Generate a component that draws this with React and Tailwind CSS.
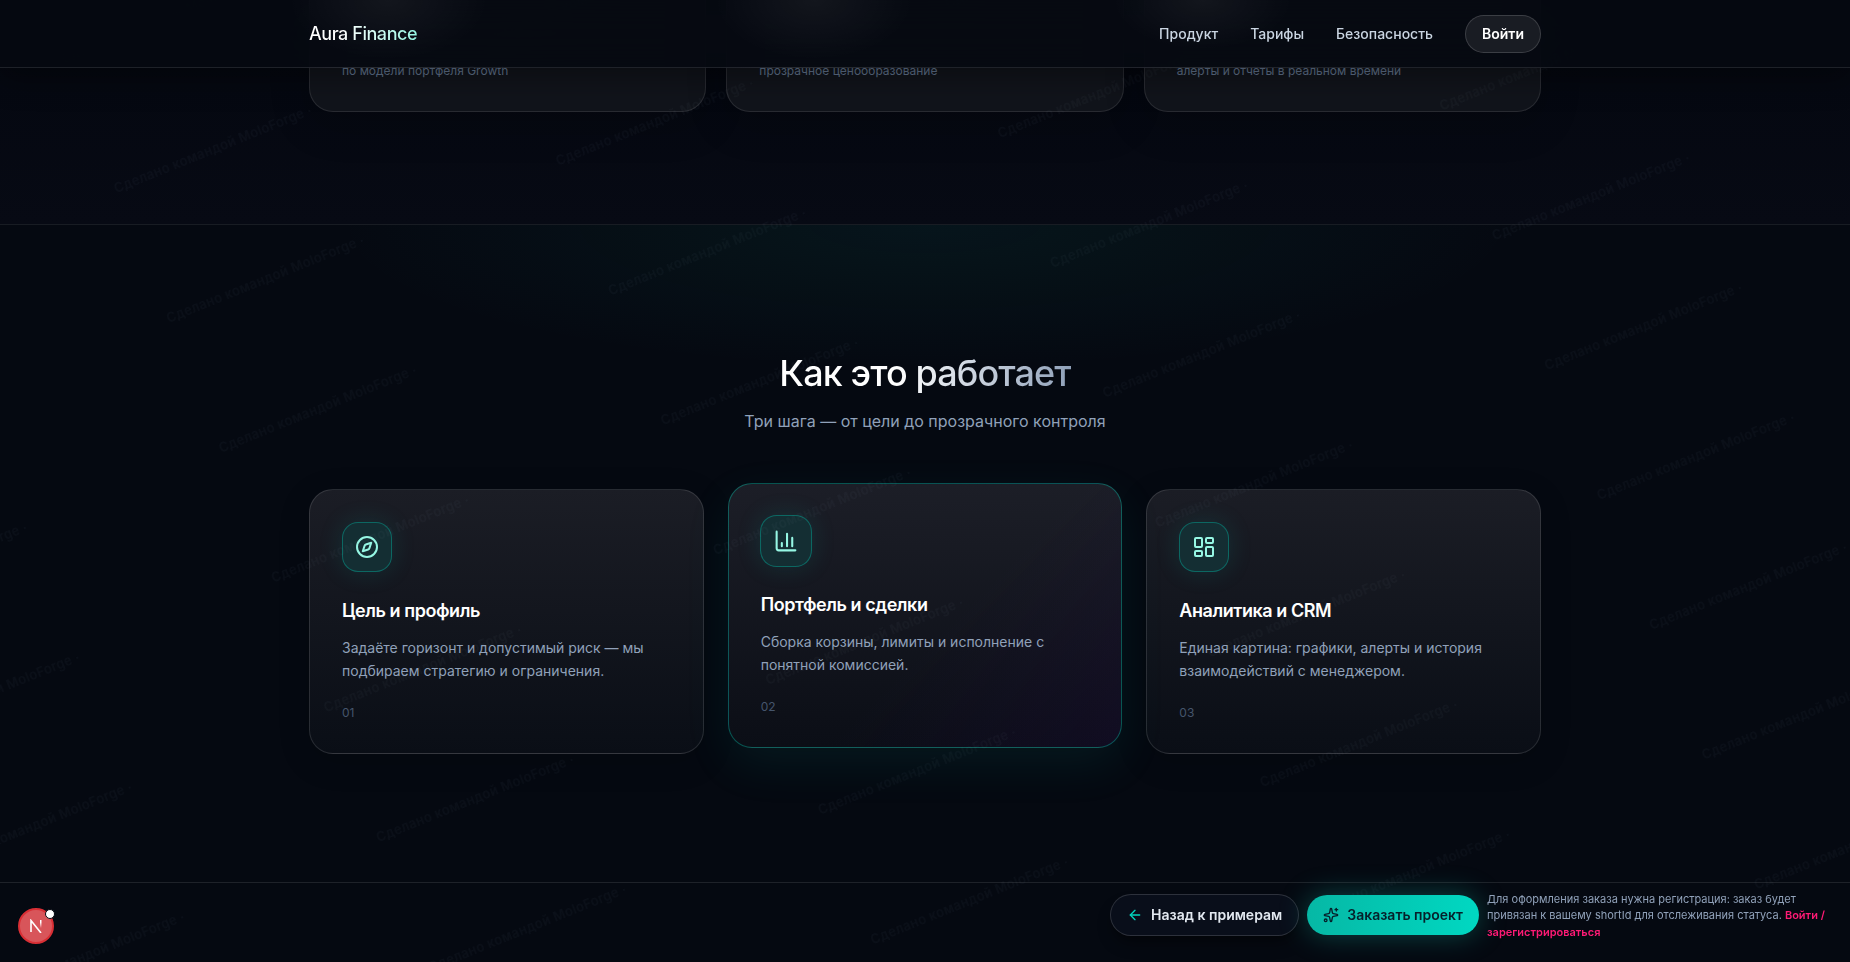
import { ArrowLeft, ChartColumn, Compass, LayoutDashboard, Sparkles } from "lucide-react";

const NAV = ["Продукт", "Тарифы", "Безопасность"];

const STATS = [
  "по модели портфеля Growth",
  "прозрачное ценообразование",
  "алерты и отчёты в реальном времени",
];

const STEPS = [
  {
    num: "01",
    title: "Цель и профиль",
    text: "Задаёте горизонт и допустимый риск — мы подбираем стратегию и ограничения.",
    icon: Compass,
  },
  {
    num: "02",
    title: "Портфель и сделки",
    text: "Сборка корзины, лимиты и исполнение с понятной комиссией.",
    icon: ChartColumn,
    featured: true,
  },
  {
    num: "03",
    title: "Аналитика и CRM",
    text: "Единая картина: графики, алерты и история взаимодействий с менеджером.",
    icon: LayoutDashboard,
  },
];

function Header() {
  return (
    <header className="fixed inset-x-0 top-0 z-20 border-b border-white/10 bg-[#050911]/90 bg-[radial-gradient(ellipse_100px_60px_at_21%_0%,rgba(255,255,255,0.05),transparent),radial-gradient(ellipse_100px_60px_at_44%_0%,rgba(255,255,255,0.05),transparent),radial-gradient(ellipse_90px_50px_at_65%_0%,rgba(255,255,255,0.05),transparent)] shadow-[0_8px_32px_rgba(0,0,0,0.4)] backdrop-blur-xl">
      <div className="mx-auto flex h-[67px] max-w-7xl items-center justify-between px-6">
        <a
          href="#top"
          className="bg-gradient-to-r from-white from-30% to-teal-200 bg-clip-text text-lg font-medium tracking-tight text-transparent"
        >
          Aura Finance
        </a>
        <nav className="flex items-center gap-8 text-sm font-medium text-slate-300">
          {NAV.map((item) => (
            <a key={item} href="#top">
              {item}
            </a>
          ))}
          <button className="rounded-full border border-white/15 bg-white/8 px-4 py-2 font-semibold text-white">
            Войти
          </button>
        </nav>
      </div>
    </header>
  );
}

function Stats() {
  return (
    <section className="bg-gradient-to-b from-[#04070f] to-[#070a14] pb-28">
      <div className="mx-auto grid max-w-7xl grid-cols-3 gap-5 px-6">
        {STATS.map((text) => (
          <div
            key={text}
            className="flex h-28 items-end rounded-b-3xl border border-t-0 border-white/10 bg-[#11141b] px-8 pb-8 shadow-[0_12px_40px_rgba(0,0,0,0.2)]"
          >
            <p className="text-xs text-slate-500">{text}</p>
          </div>
        ))}
      </div>
    </section>
  );
}

function StepCard({ step }) {
  const Icon = step.icon;

  return (
    <article
      className={
        step.featured
          ? "-translate-y-1.5 rounded-3xl border border-teal-400/35 bg-[linear-gradient(135deg,transparent_55%,rgba(30,8,60,0.3)),linear-gradient(180deg,#1c1e27,#0b0e16)] p-8 shadow-[0_16px_48px_rgba(20,184,166,0.09)]"
          : "rounded-3xl border border-white/12 bg-gradient-to-b from-[#1b1d25] to-[#0a0e16] p-8 shadow-[0_8px_32px_rgba(0,0,0,0.15)]"
      }
    >
      <div
        className={
          step.featured
            ? "flex size-[50px] scale-104 items-center justify-center rounded-2xl border border-teal-500/40 bg-[#142e33] text-teal-200 shadow-[0_0_24px_rgba(20,184,166,0.15)]"
            : "flex size-[50px] items-center justify-center rounded-2xl border border-teal-500/40 bg-[#142e33] text-teal-200 shadow-[0_0_24px_rgba(20,184,166,0.15)]"
        }
      >
        <Icon size={24} strokeWidth={2} />
      </div>
      <h3 className="mt-[25px] text-lg leading-7 font-semibold tracking-tight text-white">
        {step.title}
      </h3>
      <p className="mt-3 text-sm leading-relaxed text-slate-400">{step.text}</p>
      <p className="mt-[22px] text-xs text-slate-600">{step.num}</p>
    </article>
  );
}

function Steps() {
  return (
    <section className="border-t border-white/8 bg-[radial-gradient(ellipse_32%_22%_at_50%_0%,rgba(20,184,166,0.07),transparent)] py-32">
      <div className="mx-auto max-w-7xl px-6">
        <div className="text-center">
          <h2 className="inline-block bg-gradient-to-r from-white from-40% to-slate-400 bg-clip-text align-top text-4xl font-medium tracking-tight text-transparent">
            Как это работает
          </h2>
          <p className="mt-4 text-base text-slate-400">
            Три шага — от цели до прозрачного контроля
          </p>
        </div>
        <div className="mt-14 grid grid-cols-3 gap-6">
          {STEPS.map((step) => (
            <StepCard key={step.num} step={step} />
          ))}
        </div>
      </div>
    </section>
  );
}

// Repeating diagonal watermark over the whole page
function Watermark() {
  return (
    <svg aria-hidden="true" className="pointer-events-none fixed inset-0 z-10 size-full">
      <defs>
        <pattern
          id="watermark"
          width="420"
          height="140"
          patternUnits="userSpaceOnUse"
          patternTransform="translate(92 160) rotate(-22)"
        >
          <text x="10" y="40" className="fill-slate-400/5 text-[13px] font-semibold tracking-wide">
            Сделано командой MoloForge ·
          </text>
        </pattern>
      </defs>
      <rect width="100%" height="100%" fill="url(#watermark)" />
    </svg>
  );
}

function OrderBar() {
  return (
    <div className="fixed right-6 bottom-[22px] z-30 flex items-center gap-2">
      <button className="flex h-[42px] items-center gap-2 rounded-full border border-white/15 bg-[#090e1a] px-4 text-sm font-semibold text-slate-200 shadow-lg shadow-black/40">
        <ArrowLeft size={16} className="text-teal-400" />
        Назад к примерам
      </button>
      <button className="flex h-10 items-center gap-2 rounded-full bg-gradient-to-r from-[#06b8a5] to-[#00d8c2] px-4 text-sm font-semibold text-[#06202a] shadow-[0_0_28px_rgba(20,184,166,0.35)]">
        <Sparkles size={16} />
        Заказать проект
      </button>
      <p className="w-[339px] text-[11px] leading-normal text-slate-400">
        Для оформления заказа нужна регистрация: заказ будет привязан к вашему shortId для
        отслеживания статуса.{" "}
        <a href="#login" className="font-semibold text-[#ff1a75]">
          Войти / зарегистрироваться
        </a>
      </p>
    </div>
  );
}

function DevBadge() {
  return (
    <button
      aria-label="Dev Tools"
      className="fixed bottom-[18px] left-[18px] z-30 flex size-9 items-center justify-center rounded-full border-2 border-[#d92f35] bg-[#d8555a]"
    >
      <svg width="14" height="14" viewBox="0 0 14 14" fill="none">
        <defs>
          <linearGradient id="stem" x1="0" y1="0" x2="0" y2="1">
            <stop offset="0.3" stopColor="#fff" />
            <stop offset="1" stopColor="#fff" stopOpacity="0" />
          </linearGradient>
        </defs>
        <path d="M2 13V1.5L12 14" stroke="#fff" strokeWidth="1.6" />
        <rect x="11" y="1" width="1.5" height="8" fill="url(#stem)" />
      </svg>
      <span className="absolute -top-px -right-[3px] size-[10px] rounded-full border border-[#050911] bg-white" />
    </button>
  );
}

function App() {
  return (
    <div
      id="top"
      className="h-screen overflow-hidden bg-[#050911] font-['Inter','Liberation_Sans',sans-serif] text-white"
    >
      <Header />
      <main>
        <Stats />
        <Steps />
      </main>
      <footer className="h-20 border-t border-white/10" />
      <Watermark />
      <OrderBar />
      <DevBadge />
    </div>
  );
}

export default App;
